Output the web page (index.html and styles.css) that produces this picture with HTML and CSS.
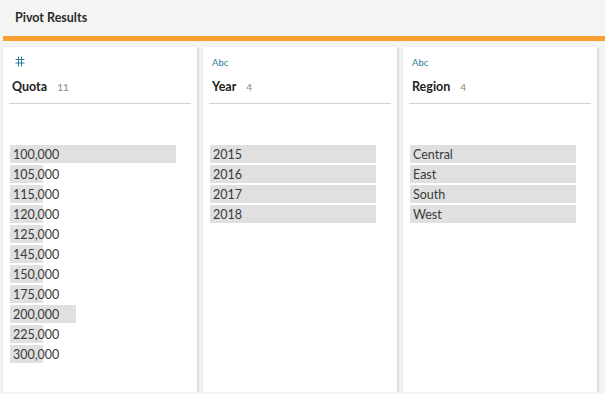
FILE: index.html
```html
<!DOCTYPE html>
<html lang="en">
<head>
    <meta charset="UTF-8">
    <title>Pivot Results</title>
    <link rel="stylesheet" href="styles.css">
</head>
<body>
    <header class="top">Pivot Results</header>
    <div class="accent"></div>
    <div class="columns">
        <div class="card">
            <div class="type">
                <svg width="10" height="11" viewBox="0 0 10 11"><path d="M3.5 0.5V10.5M6.5 0.5V10.5M0.5 3.5H9.5M0.5 7H9.5" stroke="#2f7d99" stroke-width="1" fill="none"/></svg>
            </div>
            <div class="title">Quota <span class="count">11</span></div>
            <div class="rule"></div>
            <ul class="values">
                <li><span class="bar" style="width: 166px"></span><span class="label">100,000</span></li>
                <li><span class="bar" style="width: 33px"></span><span class="label">105,000</span></li>
                <li><span class="bar" style="width: 33px"></span><span class="label">115,000</span></li>
                <li><span class="bar" style="width: 33px"></span><span class="label">120,000</span></li>
                <li><span class="bar" style="width: 33px"></span><span class="label">125,000</span></li>
                <li><span class="bar" style="width: 33px"></span><span class="label">145,000</span></li>
                <li><span class="bar" style="width: 33px"></span><span class="label">150,000</span></li>
                <li><span class="bar" style="width: 33px"></span><span class="label">175,000</span></li>
                <li><span class="bar" style="width: 66px"></span><span class="label">200,000</span></li>
                <li><span class="bar" style="width: 33px"></span><span class="label">225,000</span></li>
                <li><span class="bar" style="width: 33px"></span><span class="label">300,000</span></li>
            </ul>
        </div>
        <div class="card">
            <div class="type abc">Abc</div>
            <div class="title">Year <span class="count">4</span></div>
            <div class="rule"></div>
            <ul class="values">
                <li><span class="bar" style="width: 166px"></span><span class="label">2015</span></li>
                <li><span class="bar" style="width: 166px"></span><span class="label">2016</span></li>
                <li><span class="bar" style="width: 166px"></span><span class="label">2017</span></li>
                <li><span class="bar" style="width: 166px"></span><span class="label">2018</span></li>
            </ul>
        </div>
        <div class="card">
            <div class="type abc">Abc</div>
            <div class="title">Region <span class="count">4</span></div>
            <div class="rule"></div>
            <ul class="values">
                <li><span class="bar" style="width: 166px"></span><span class="label">Central</span></li>
                <li><span class="bar" style="width: 166px"></span><span class="label">East</span></li>
                <li><span class="bar" style="width: 166px"></span><span class="label">South</span></li>
                <li><span class="bar" style="width: 166px"></span><span class="label">West</span></li>
            </ul>
        </div>
    </div>
</body>
</html>
```
FILE: styles.css
```css
body {
    font-family: 'Lato', sans-serif;
    background: #f4f4f4;
    margin: 0;
    padding: 0;
    color: #333;
}
.top {
    height: 35px;
    display: flex;
    align-items: center;
    padding-left: 15px;
    padding-bottom: 1px;
    font-size: 12.5px;
    font-weight: bold;
    color: #2b2b2b;
}
.accent {
    height: 5px;
    margin-left: 3px;
    background-color: #f7a031;
}
.columns {
    display: flex;
    gap: 6px;
    padding: 6px 0 0 3px;
}
.card {
    width: 194px;
    height: 345px;
    background: white;
    box-shadow: 1px 1px 3px rgba(0, 0, 0, 0.16);
    padding: 0 6px;
    box-sizing: border-box;
}
.type {
    margin-top: 9px;
    height: 13px;
    padding-left: 6px;
    line-height: 13px;
}
.type svg {
    display: block;
}
.type.abc {
    padding-left: 3px;
    font-size: 9.5px;
    color: #2f7d99;
}
.title {
    margin-top: 9px;
    padding-left: 3px;
    line-height: 18px;
    font-size: 12.5px;
    font-weight: bold;
    color: #222;
}
.count {
    margin-left: 7px;
    font-size: 10px;
    font-weight: normal;
    color: #7b8794;
}
.rule {
    margin-top: 7px;
    height: 1px;
    background-color: #d3d3d3;
}
.values {
    list-style: none;
    margin: 41px 0 0 1px;
    padding: 0;
}
.values li {
    position: relative;
    height: 18px;
    margin-bottom: 2px;
}
.bar {
    position: absolute;
    left: 0;
    top: 0;
    height: 18px;
    background-color: #e0e0e0;
}
.label {
    position: relative;
    display: block;
    padding: 1px 0 0 3px;
    font-size: 12.5px;
    line-height: 17px;
    color: #3a3a3a;
}
```
